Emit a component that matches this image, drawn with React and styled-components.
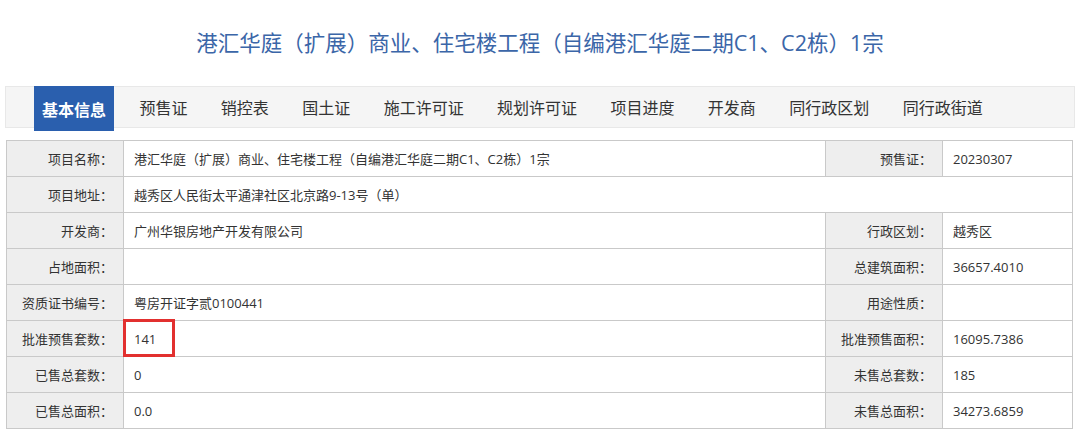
import React from 'react';
import styled, { createGlobalStyle } from 'styled-components';

const GlobalStyles = createGlobalStyle`
  body {
    margin: 0;
    background: #ffffff;
    font-family: "Open Sans", "Noto Sans CJK SC", sans-serif;
    color: #333333;
  }
`;

const tabs = [
  '基本信息',
  '预售证',
  '销控表',
  '国土证',
  '施工许可证',
  '规划许可证',
  '项目进度',
  '开发商',
  '同行政区划',
  '同行政街道',
];

const rows = [
  { label: '项目名称：', value: '港汇华庭（扩展）商业、住宅楼工程（自编港汇华庭二期C1、C2栋）1宗', label2: '预售证：', value2: '20230307' },
  { label: '项目地址：', value: '越秀区人民街太平通津社区北京路9-13号（单）', full: true },
  { label: '开发商：', value: '广州华银房地产开发有限公司', label2: '行政区划：', value2: '越秀区' },
  { label: '占地面积：', value: '', label2: '总建筑面积：', value2: '36657.4010' },
  { label: '资质证书编号：', value: '粤房开证字贰0100441', label2: '用途性质：', value2: '' },
  { label: '批准预售套数：', value: '141', label2: '批准预售面积：', value2: '16095.7386', marked: true },
  { label: '已售总套数：', value: '0', label2: '未售总套数：', value2: '185' },
  { label: '已售总面积：', value: '0.0', label2: '未售总面积：', value2: '34273.6859' },
];

const App = () => {
  return (
    <>
      <GlobalStyles />
      <Page>
        <Title>港汇华庭（扩展）商业、住宅楼工程（自编港汇华庭二期C1、C2栋）1宗</Title>
        <Nav>
          {tabs.map((t, i) => (
            <Tab key={t} active={i === 0}>{t}</Tab>
          ))}
        </Nav>
        <InfoTable>
          <colgroup>
            <col style={{ width: 117 }} />
            <col style={{ width: 702 }} />
            <col style={{ width: 117 }} />
            <col style={{ width: 130 }} />
          </colgroup>
          <tbody>
            {rows.map((r) => (
              <tr key={r.label}>
                <Label>{r.label}</Label>
                {r.full ? (
                  <Value colSpan={3}>{r.value}</Value>
                ) : (
                  <>
                    <Value>
                      {r.value}
                      {r.marked && <Marker />}
                    </Value>
                    <Label>{r.label2}</Label>
                    <Value>{r.value2}</Value>
                  </>
                )}
              </tr>
            ))}
          </tbody>
        </InfoTable>
      </Page>
    </>
  );
};

export default App;

const Page = styled.div`
  width: 1080px;
  padding-top: 28px;
`;

const Title = styled.h1`
  margin: 0;
  height: 30px;
  line-height: 30px;
  text-align: center;
  font-size: 21.5px;
  font-weight: normal;
  color: #3b66a8;
`;

const Nav = styled.div`
  display: flex;
  align-items: flex-start;
  gap: 17.4px;
  height: 42px;
  margin: 28px 5px 0 5px;
  padding-left: 28px;
  background: #f5f5f5;
  border: 1px solid #e8e8e8;
  box-sizing: border-box;
`;

const Tab = styled.div`
  display: flex;
  align-items: center;
  justify-content: center;
  height: ${({ active }) => (active ? '45px' : '41px')};
  margin-top: -1px;
  padding: 0 8px;
  font-size: 16px;
  color: ${({ active }) => (active ? '#ffffff' : '#333333')};
  background: ${({ active }) => (active ? '#2a5fae' : 'transparent')};
  font-weight: ${({ active }) => (active ? 'bold' : 'normal')};
  white-space: nowrap;
`;

const InfoTable = styled.table`
  width: 1066px;
  margin: 12px 0 0 6px;
  border-collapse: collapse;
  table-layout: fixed;
  font-size: 13px;
  border: 1px solid #b8b8b8;
`;

const Label = styled.td`
  height: 36px;
  padding: 0 10px 0 0;
  text-align: right;
  background: #eeeeee;
  border: 1px solid #c9c9c9;
  color: #333333;
  white-space: nowrap;
  box-sizing: border-box;
`;

const Value = styled.td`
  position: relative;
  height: 36px;
  padding: 0 0 0 10px;
  text-align: left;
  background: #ffffff;
  border: 1px solid #c9c9c9;
  color: #333333;
  white-space: nowrap;
  box-sizing: border-box;
`;

const Marker = styled.span`
  position: absolute;
  left: -1px;
  top: -2px;
  width: 52px;
  height: 38px;
  border: 3px solid #e2302f;
  box-sizing: border-box;
`;
